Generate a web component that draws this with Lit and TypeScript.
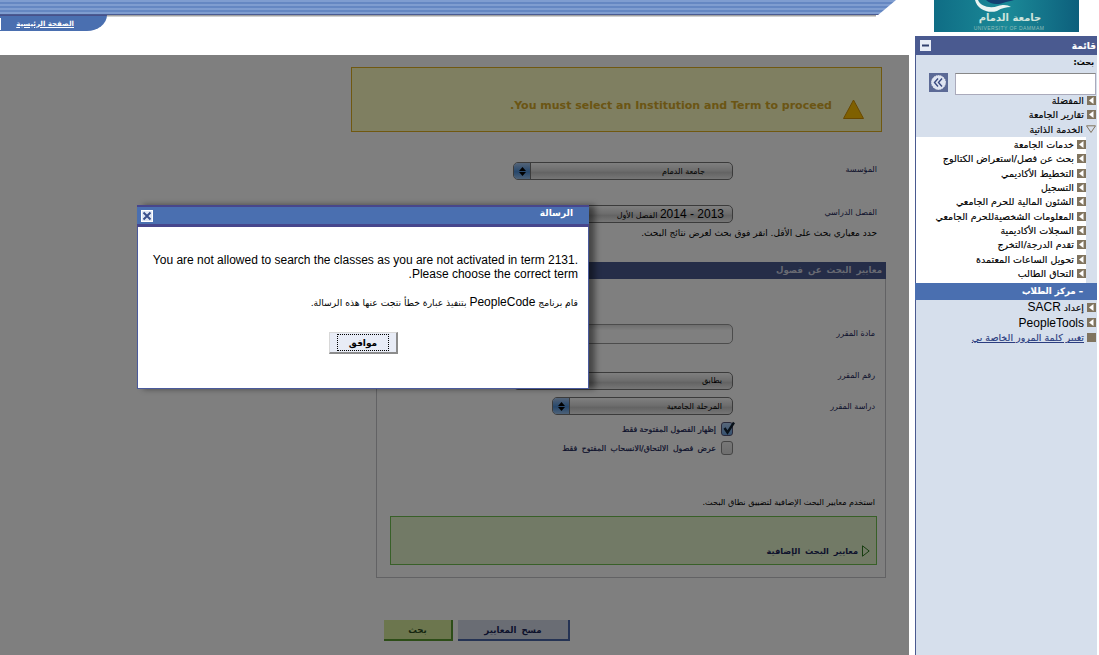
import { LitElement, html, css } from "lit";
import { customElement } from "lit/decorators.js";

const navTop = ["المفضلة", "تقارير الجامعة"];
const navSub = [
  "خدمات الجامعة",
  "بحث عن فصل/استعراض الكتالوج",
  "التخطيط الأكاديمي",
  "التسجيل",
  "الشئون المالية للحرم الجامعي",
  "المعلومات الشخصيةللحرم الجامعي",
  "السجلات الأكاديمية",
  "تقدم الدرجة/التخرج",
  "تحويل الساعات المعتمدة",
  "التحاق الطالب",
];

const arrow = html`<svg class="arrow" viewBox="0 0 9 9"><rect width="9" height="9" fill="#80745f"/><path d="M2 4.5 6.5 1v7z" fill="#fff"/></svg>`;

@customElement("app-root")
export class AppRoot extends LitElement {
  static styles = css`
    :host { display: block; width: 1099px; height: 655px; overflow: hidden; background: #fff; font-family: "Liberation Sans", "DejaVu Sans", sans-serif; color: #000; }
    * { box-sizing: border-box; }
    .frame { display: grid; grid-template-columns: 909px 190px; height: 655px; }
    .left { display: flex; flex-direction: column; min-width: 0; }
    .top { height: 55px; flex: none; }
    .banner { width: 896px; height: 15px; clip-path: polygon(0 0, 100% 0, 98% 100%, 0 100%);
      background: repeating-linear-gradient(to bottom, #7f9dd0 0 2px, #6587c2 2px 4px); border-bottom: 1px solid #4a5b92; }
    .bshadow { height: 2px; width: 876px; background: linear-gradient(#8a8a8a, #e8e8e8); }
    .tab { width: 107px; height: 16px; margin-top: -2px; background: #4a6fb0; border-bottom-right-radius: 20px 16px; display: flex; align-items: center; justify-content: flex-end; padding: 0 33px 0 0; position: relative; border-top: 1px solid #47508a; }
    .tab a { color: #fff; font-size: 7px; font-weight: bold; text-decoration: underline; direction: rtl; font-family: "DejaVu Sans", sans-serif; }
    .tab i { position: absolute; left: 0; top: 2px; width: 1px; height: 12px; background: #fff; }

    .content { position: relative; flex: 1; direction: rtl; padding-top: 12px; font-family: "DejaVu Sans", sans-serif; font-size: 9px; }
    .overlay { position: absolute; inset: 0; background: rgba(0,0,0,.5); }
    .warn { width: 531px; height: 65px; margin-right: 27px; background: #fffec2; border: 1px solid #e0b020; display: flex; align-items: center; padding: 10px 17px 0 0; gap: 11px; color: #d6aa28; font-weight: bold; font-size: 11px; }
    .warn span { padding-top: 2px; }
    .warn svg { width: 21px; height: 20px; flex: none; margin-top: 8px; }
    .row { display: flex; margin-right: 32px; align-items: center; color: #1a2558; }
    .lab { font-size: 8px; }
    .row .lab { width: 144px; flex: none; }
    .u2 { margin-bottom: 4px; }
    .u1 { margin-bottom: 2px; }
    .u5 { margin-bottom: 10px; }
    .sel { height: 18px; border: 1px solid #777; border-radius: 5px; background: linear-gradient(#fff, #ddd 45%, #c8c8c8 60%, #eee); display: flex; align-items: center; justify-content: space-between; padding-right: 10px; overflow: hidden; color: #000; font-size: 8px; }
    .sel.inst { padding-right: 27px; }
    .sel.term { padding-right: 8px; }
    .spin { width: 17px; height: 100%; background: linear-gradient(#a8c8f0, #4d8fd8 55%, #9cc4f0); border-right: 1px solid #777; display: flex; flex-direction: column; align-items: center; justify-content: center; gap: 1px; }
    .spin svg { width: 7px; height: 4px; display: block; }
    .w220 { width: 220px; }
    .w181 { width: 181px; }
    .r1 { margin-top: 30px; }
    .r2 { margin-top: 25px; }
    .big { font-family: "Liberation Sans", sans-serif; font-size: 12px; letter-spacing: .3px; }
    .hint { margin: 3px 32px 0 0; height: 14px; line-height: 14px; color: #000; }
    .panel { width: 510px; height: 316px; margin: 22px 23px 0 0; border: 1px solid #c4c4c8; display: flex; flex-direction: column; }
    .phead { height: 17px; background: #4a5a90; color: #d0d4e4; font-size: 8.6px; font-weight: bold; padding: 0 4px; line-height: 16px; word-spacing: 2px; letter-spacing: .4px; flex: none; margin: -1px -1px 0; }
    .prow { display: flex; align-items: center; padding-right: 10px; color: #1a2558; }
    .prow .lab { width: 142px; flex: none; }
    .inp { height: 20px; width: 300px; border: 1px solid #999; border-radius: 5px; background: linear-gradient(#ddd, #fff 30%); }
    .p1 { margin-top: 45px; }
    .p2 { margin-top: 27px; }
    .p3 { margin-top: 7px; }
    .chk { display: flex; align-items: center; gap: 5px; padding-right: 152px; height: 14px; color: #1a2558; font-size: 7.8px; -webkit-text-stroke: .2px #1a2558; }
    .c1 { margin-top: 7px; }
    .c2 { margin-top: 5px; word-spacing: 2px; }
    .box { width: 12px; height: 14px; border: 1px solid #8a8a8a; border-radius: 3px; background: linear-gradient(#eee, #ddd); flex: none; position: relative; }
    .box.on { background: linear-gradient(#b0d0f4, #6ea4e0); border-color: #557; }
    .box svg { position: absolute; left: 0; top: -2px; width: 13px; height: 14px; }
    .note { margin: 40px 10px 0 0; height: 14px; line-height: 14px; color: #000; font-size: 8.1px; }
    .green { margin: 7px 8px 0 0; width: 487px; height: 49px; background: #e4f4cc; border: 1px solid #70c050; display: flex; align-items: center; gap: 4px; padding: 21px 6px 0 0; color: #1a2558; font-weight: bold; font-size: 8.2px; word-spacing: 2px; letter-spacing: .4px; }
    .green svg { width: 8px; height: 12px; flex: none; }
    .btns { display: flex; gap: 7px; margin: 42px 341px 0 0; }
    .btn { height: 21px; display: flex; align-items: center; justify-content: center; font-weight: bold; font-size: 8.6px; letter-spacing: .5px; word-spacing: 2px; }
    .bb { width: 110px; background: #d4dae8; border-bottom: 2px solid #4a66a8; color: #1a2558; box-shadow: 2px 0 0 #4a66a8; }
    .bg { width: 67px; background: #d8ec9c; border-bottom: 2px solid #5a9a30; color: #2a4a20; box-shadow: 2px 0 0 #5a9a30; }

    .modal { position: absolute; left: 137px; top: 150px; width: 452px; height: 184px; background: #fff; border: 1px solid #4a5a9c; border-top: none; box-shadow: 6px 0 6px rgba(0,0,0,.45); display: flex; flex-direction: column; direction: rtl; }
    .mhead { height: 22px; margin: 0 -1px; background: #4a6fb0; border-top: 2px solid #47468c; border-bottom: 3px solid #47468c; color: #fff; display: flex; align-items: center; justify-content: space-between; padding: 0 16px 0 4px; font-weight: bold; font-size: 9px; flex: none; font-family: "DejaVu Sans", sans-serif; }
    .mhead span { margin-bottom: 5px; }
    .mhead svg { width: 12px; height: 12px; margin-left: 0; }
    .m1 { margin: 26px 10px 0 10px; font-family: "Liberation Sans", sans-serif; font-size: 12px; line-height: 14px; }
    .m2 { margin: 14px 10px 0 0; font-size: 9.2px; line-height: 14px; font-family: "DejaVu Sans", sans-serif; }
    .m2 b { font: 12px "Liberation Sans", sans-serif; }
    .mbtn { width: 69px; height: 22px; margin: 22px 190px 0 0; background: #e8ecf6; border-right: 2px solid #8c8c8c; border-bottom: 2px solid #8c8c8c; border-top: 1px solid #d8d8d8; border-left: 1px solid #d8d8d8; padding: 1px 7px; }
    .mbtn span { display: flex; height: 100%; border: 1px dotted #000; align-items: center; justify-content: center; font-weight: bold; font-size: 9px; font-family: "DejaVu Sans", sans-serif; }

    .right { font-family: "DejaVu Sans", sans-serif; font-size: 9.5px; direction: rtl; }
    .logo { width: 145px; height: 32px; margin-right: 20px; display: block; }
    .side { width: 182px; height: 619px; margin: 4px 2px 0 0; background: #d6dfec; border-left: 1px solid #4a5a90; display: flex; flex-direction: column; -webkit-text-stroke: .15px; }
    .shead { height: 19px; margin-left: -1px; background: #4a5a90; color: #fff; font-weight: bold; font-size: 9px; display: flex; align-items: center; justify-content: space-between; padding: 0 1px 0 5px; flex: none; }
    .shead svg { width: 11px; height: 11px; }
    .slab { font-weight: bold; padding: 3px 3px 0 0; height: 18px; font-size: 8px; }
    .search { display: flex; align-items: flex-start; gap: 7px; height: 20px; padding-right: 1px; }
    .search input { width: 141px; height: 22px; border: 1px solid #aab; border-top-color: #888; background: #fff; display: block; padding: 0; }
    .search svg { width: 19px; height: 19px; flex: none; }
    .nr { display: flex; align-items: center; gap: 3px; height: 14.5px; padding-right: 1px; flex: none; white-space: nowrap; }
    .arrow { width: 9px; height: 9px; flex: none; }
    .sub { background: #fff; width: 170px; margin-right: 11px; padding: 1px 0 2px; height: 146px; flex: none; display: flex; flex-direction: column; justify-content: center; }
    .sub .nr { height: 14.3px; padding: 0; }
    .open svg { width: 10px; height: 8px; flex: none; }
    .cur { height: 17px; background: #4a6fb0; color: #fff; font-weight: bold; font-size: 8.6px; display: flex; align-items: center; padding-right: 14px; flex: none; gap: 3px; margin-left: -1px; }
    .low { height: 15.4px; font-size: 9.5px; }
    .low b { font: 12px "Liberation Sans", sans-serif; -webkit-text-stroke: 0; }
    .low em { font-style: normal; font-size: 9.5px; font-family: "DejaVu Sans", sans-serif; }
    .low a { color: #2b3d80; text-decoration: underline; }
    .sq { width: 9px; height: 9px; background: #80745f; flex: none; }
  `;

  render() {
    const spin = html`<span class="spin"><svg viewBox="0 0 7 4"><path d="M3.5 0 7 4H0z"/></svg><svg viewBox="0 0 7 4"><path d="M3.5 4 0 0h7z"/></svg></span>`;
    return html`<div class="frame">
      <div class="left">
        <div class="top">
          <div class="banner"></div>
          <div class="bshadow"></div>
          <div class="tab"><i></i><a>الصفحة الرئيسية</a></div>
        </div>
        <div class="content">
          <div class="warn">
            <svg viewBox="0 0 21 20"><path d="M10.5 1 20.5 19.5H.5z" fill="#ffc000" stroke="#d09000"/></svg>
            <span>You must select an Institution and Term to proceed.</span>
          </div>
          <div class="row r1"><span class="lab u2">المؤسسة</span><div class="sel w220 inst"><span>جامعة الدمام</span>${spin}</div></div>
          <div class="row r2"><span class="lab u2">الفصل الدراسي</span><div class="sel w220 term"><span><span class="big">2013 - 2014</span> الفصل الأول</span>${spin}</div></div>
          <div class="hint">حدد معياري بحث على الأقل. انقر فوق بحث لعرض نتائج البحث.</div>
          <div class="panel">
            <div class="phead">معايير البحث عن فصول</div>
            <div class="prow p1"><span class="lab u1">مادة المقرر</span><div class="inp"></div></div>
            <div class="prow p2"><span class="lab u5">رقم المقرر</span><div class="sel w220"><span>يطابق</span></div></div>
            <div class="prow p3"><span class="lab">دراسة المقرر</span><div class="sel w181"><span>المرحلة الجامعية</span>${spin}</div></div>
            <div class="chk c1"><span class="box on"><svg viewBox="0 0 13 14"><path d="M2.5 7 5.5 11.5 12 1.5" fill="none" stroke="#123" stroke-width="2.4"/></svg></span><span>إظهار الفصول المفتوحة فقط</span></div>
            <div class="chk c2"><span class="box"></span><span>عرض فصول الالتحاق/الانسحاب المفتوح فقط</span></div>
            <div class="note">استخدم معايير البحث الإضافية لتضييق نطاق البحث.</div>
            <div class="green">
              <svg viewBox="0 0 8 12"><path d="M.5.8 7.2 6 .5 11.2z" fill="#e4f4cc" stroke="#2f7a20"/></svg>
              <span>معايير البحث الإضافية</span>
            </div>
          </div>
          <div class="btns"><div class="btn bb">مسح المعايير</div><div class="btn bg">بحث</div></div>

          <div class="overlay"></div>
          <div class="modal">
            <div class="mhead"><span>الرسالة</span>
              <svg viewBox="0 0 12 12"><rect width="12" height="12" fill="#fff"/><rect x="1" y="1" width="10" height="10" fill="#dfe6f4"/><path d="M2.5 2.5l7 7M9.5 2.5l-7 7" stroke="#3a4f8c" stroke-width="2"/></svg>
            </div>
            <div class="m1">You are not allowed to search the classes as you are not activated in term 2131. Please choose the correct term.</div>
            <div class="m2">قام برنامج <b>PeopleCode</b> بتنفيذ عبارة خطأ نتجت عنها هذه الرسالة.</div>
            <div class="mbtn"><span>موافق</span></div>
          </div>
        </div>
      </div>
      <div class="right">
        <svg class="logo" viewBox="0 0 145 32">
          <defs><linearGradient id="lg" x1="0" x2="1" y1="0" y2="0"><stop offset="0" stop-color="#0f6d85"/><stop offset=".5" stop-color="#1b8a98"/><stop offset="1" stop-color="#0d5f7c"/></linearGradient></defs>
          <rect width="145" height="32" fill="url(#lg)"/>
          <path d="M44 0c2 6 12 9 20 6 6-2 10-1 13 1-5 0-9 1-14 4-9 3-20-2-22-11z" fill="#eaf4f2"/>
          <path d="M52 0c5 5 13 5 20 2 3-1 6-1 8-2z" fill="#123f70"/>
          <text x="76" y="21" text-anchor="middle" font-family="DejaVu Sans" font-size="10" font-weight="bold" fill="#cfe4dc" direction="rtl">جامعة الدمام</text>
          <text x="75" y="29.500" text-anchor="middle" font-family="Liberation Sans" font-size="5" fill="#8fbcb8" letter-spacing=".4">UNIVERSITY OF DAMMAM</text>
        </svg>
        <div class="side">
          <div class="shead"><span>قائمة</span><svg viewBox="0 0 11 11"><rect width="11" height="11" fill="#e8ecf6"/><rect x="2" y="4.500" width="7" height="2" fill="#33406e"/></svg></div>
          <div class="slab">بحث:</div>
          <div class="search"><input aria-label="بحث" /><svg viewBox="0 0 19 19"><rect width="19" height="19" fill="#5c6a96"/><circle cx="9.500" cy="9.500" r="7" fill="#dfe5f2" stroke="#fff" stroke-dasharray="1 1"/><path d="M9 5.500 5.500 9.500 9 13.500M13 5.500 9.500 9.500 13 13.500" fill="none" stroke="#3a4a80" stroke-width="1.400"/></svg></div>
          ${navTop.map((t) => html`<div class="nr">${arrow}<span>${t}</span></div>`)}
          <div class="nr open"><svg viewBox="0 0 10 8"><path d="M.5.800h9L5 7.500z" fill="#d6dfec" stroke="#80745f"/></svg><span>الخدمة الذاتية</span></div>
          <div class="sub">${navSub.map((t) => html`<div class="nr">${arrow}<span>${t}</span></div>`)}</div>
          <div class="cur"><span>–</span><span>مركز الطلاب</span></div>
          <div class="nr low">${arrow}<span><em>إعداد</em> <b>SACR</b></span></div>
          <div class="nr low">${arrow}<b>PeopleTools</b></div>
          <div class="nr low"><span class="sq"></span><a>تغيير كلمة المرور الخاصة بي</a></div>
        </div>
      </div>
    </div>`;
  }
}
